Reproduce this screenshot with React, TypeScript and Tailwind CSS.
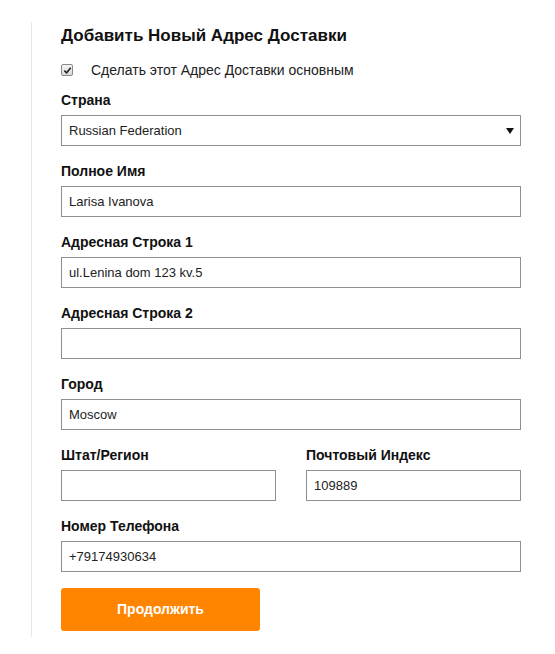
const fields: { label: string; value: string }[] = [
  { label: "Полное Имя", value: "Larisa Ivanova" },
  { label: "Адресная Строка 1", value: "ul.Lenina dom 123 kv.5" },
  { label: "Адресная Строка 2", value: "" },
  { label: "Город", value: "Moscow" },
];

const font = { fontFamily: '"Liberation Sans", Arial, sans-serif' };

function Label({ children }: { children: React.ReactNode }) {
  return (
    <div className="mb-[5px] h-5 text-[14px] font-bold leading-5 text-[#111]">
      {children}
    </div>
  );
}

function Input({ value }: { value: string }) {
  return (
    <div className="mb-[15px] flex h-[31px] items-center border border-[#8f8f8f] bg-white px-[7px] text-[13px] text-[#222]">
      {value}
    </div>
  );
}

export default function App() {
  return (
    <div className="min-h-[654px] bg-white pl-[31px] pt-[22px]" style={font}>
      <div className="w-[490px] border-l border-[#e8e8e8] pb-[6px] pl-[29px]">
        <h2 className="mb-[10px] h-7 text-[17px] font-bold leading-7 text-[#111]">
          Добавить Новый Адрес Доставки
        </h2>

        {/* основной адрес */}
        <label className="mb-[10px] flex h-5 items-center">
          <span className="flex h-[12px] w-[12px] items-center justify-center rounded-[2px] border border-[#8a8a8a] bg-gradient-to-b from-[#f4f4f4] to-[#d9d9d9]">
            <svg viewBox="0 0 10 10" className="h-[9px] w-[9px]">
              <path d="M1.5 5.2 L4 7.6 L8.6 2" fill="none" stroke="#222" strokeWidth="1.8" />
            </svg>
          </span>
          <span className="ml-[18px] text-[14px] text-[#222]">
            Сделать этот Адрес Доставки основным
          </span>
        </label>

        <Label>Страна</Label>
        <div className="mb-[15px] flex h-[31px] items-center justify-between border border-[#8f8f8f] bg-white pl-[7px] pr-[6px] text-[13px] text-[#222]">
          <span>Russian Federation</span>
          <svg viewBox="0 0 8 6" className="h-[6px] w-[8px]">
            <path d="M0 0 H8 L4 6 Z" fill="#111" />
          </svg>
        </div>

        {fields.map((f) => (
          <div key={f.label}>
            <Label>{f.label}</Label>
            <Input value={f.value} />
          </div>
        ))}

        <div className="grid grid-cols-2 gap-x-[30px]">
          <div>
            <Label>Штат/Регион</Label>
            <Input value="" />
          </div>
          <div>
            <Label>Почтовый Индекс</Label>
            <Input value="109889" />
          </div>
        </div>

        <Label>Номер Телефона</Label>
        <div className="mb-[16px] flex h-[31px] items-center border border-[#8f8f8f] bg-white px-[7px] text-[13px] text-[#222]">
          +79174930634
        </div>

        <button className="h-[43px] w-[199px] rounded-[3px] bg-[#ff8400] text-[14px] font-bold text-white">
          Продолжить
        </button>
      </div>
    </div>
  );
}
